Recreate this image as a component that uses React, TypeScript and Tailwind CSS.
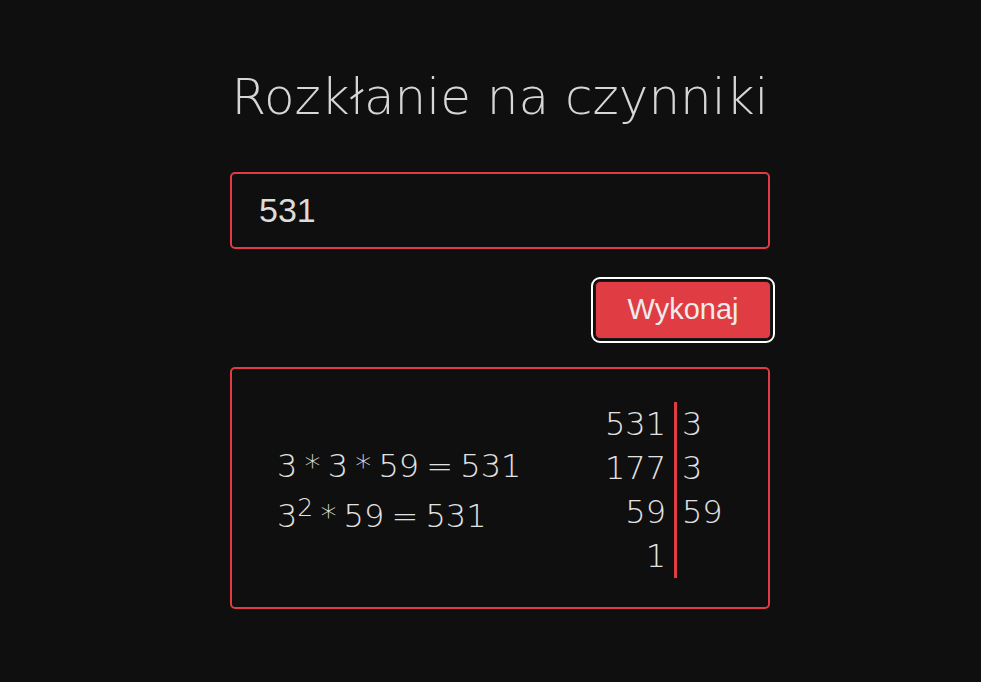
import { useState } from "react";

const steps = [
  { n: "531", d: "3" },
  { n: "177", d: "3" },
  { n: "59", d: "59" },
  { n: "1", d: "" },
];

export default function App() {
  const [value, setValue] = useState("531");

  return (
    <div className="min-h-screen w-full bg-[#0f0f0f] text-[#dedede]">
      <div className="ml-[230px] w-[540px] pt-[67px]">
        <h1 className="text-center text-[50px] leading-[60px] font-extralight text-[#d6d6d6] font-['DejaVu_Sans',sans-serif]">
          Rozkłanie na czynniki
        </h1>

        <input
          value={value}
          onChange={(e) => setValue(e.target.value)}
          className="mt-[45px] block h-[77px] w-[540px] rounded-[5px] border-2 border-[#e03c43] bg-[#0f0f0f] px-[27px] text-[34px] text-[#dcdcdc] outline-none font-['Liberation_Sans',Arial,sans-serif]"
        />

        <div className="mt-[32px] flex justify-end">
          <button className="mr-[-1px] h-[58px] w-[176px] rounded-[5px] border border-[#1a1a1a] bg-[#e03c43] text-[29px] text-[#ececec] outline-2 outline-offset-2 outline-white font-['Liberation_Sans',Arial,sans-serif]">
            Wykonaj
          </button>
        </div>

        <div className="mt-[28px] flex h-[242px] items-center rounded-[5px] border-2 border-[#e03c43] font-['DejaVu_Sans',sans-serif] font-extralight text-[32px] text-[#e2e2e2]">
          <div className="flex-1 pl-[45px] pt-[6px] leading-[50px] [word-spacing:-3px]">
            <div>3 * 3 * 59 = 531</div>
            <div>
              3<span className="align-[11px] text-[25px] leading-none">2</span> * 59 = 531
            </div>
          </div>
          <div className="mr-[21px] mt-[4px] flex leading-[44px]">
            <div className="border-r-[3px] border-[#e03c43] pr-[8px] text-right">
              {steps.map((s) => (
                <div key={s.n}>{s.n}</div>
              ))}
            </div>
            <div className="w-[70px] pl-[5px]">
              {steps.map((s) => (
                <div key={s.n}>{s.d || "\u00a0"}</div>
              ))}
            </div>
          </div>
        </div>
      </div>
    </div>
  );
}
